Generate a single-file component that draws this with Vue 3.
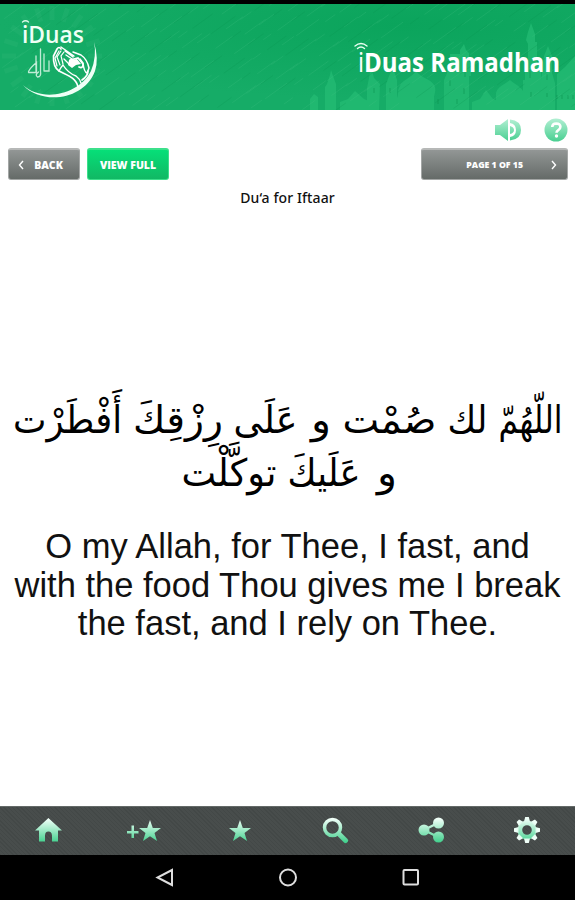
<script setup>
/**
 * Short diagonal strokes for the brushed header texture
 */
const strokes = Array.from({ length: 260 }, (_, i) => {
  const x = (i * 97.3) % 590
  const y = (i * 41.7) % 108
  const len = 8 + ((i * 13) % 17)
  return {
    d: `M${x.toFixed(1)} ${y.toFixed(1)}l${len} ${(-len * 0.72).toFixed(1)}`,
    color: i % 3 === 0 ? '#078f4c' : '#4cc78b'
  }
})

const rays = Array.from({ length: 20 }, (_, i) => i * 18)
const teeth = Array.from({ length: 8 }, (_, i) => i * 45)

/**
 * Arabic words with the centre and width of each one
 */
const arabicLines = [
  {
    y: 48,
    words: [
      { text: 'اللّهُمّ', x: 530.5, width: 64 },
      { text: 'لك', x: 467.5, width: 40 },
      { text: 'صُمْت', x: 389.5, width: 94 },
      { text: 'و', x: 321, width: 20 },
      { text: 'عَلَى', x: 265.5, width: 64 },
      { text: 'رِزْقِكَ', x: 178, width: 90 },
      { text: 'أَفْطَرْت', x: 67.5, width: 109 }
    ]
  },
  {
    y: 101,
    words: [
      { text: 'و', x: 387, width: 20 },
      { text: 'عَلَيكَ', x: 324, width: 73 },
      { text: 'توكَّلْت', x: 229, width: 95 }
    ]
  }
]

const englishLines = [
  'O my Allah, for Thee, I fast, and',
  'with the food Thou gives me I break',
  'the fast, and I rely on Thee.'
]
</script>

<template>
  <div class="screen">
    <header class="header">
      <svg class="banner" viewBox="0 0 575 106" width="575" height="106">
        <defs>
          <radialGradient id="shade" cx="0.7" cy="0.2" r="0.7">
            <stop offset="0" stop-color="#0ba45c" />
            <stop offset="1" stop-color="#16ac67" />
          </radialGradient>
        </defs>
        <rect width="575" height="106" fill="url(#shade)" />
        <g stroke="#2fb878" stroke-width="5" opacity="0.28">
          <path v-for="r in rays" :key="r" d="M52 2v14" :transform="`rotate(${r} 52 52)`" />
        </g>
        <g fill="#24bc74" opacity="0.75">
          <path d="M310 106V95l4-5 4 3v13zM325 106V83l2-3 3-9 1-5 2 6 3 8v26zM340 106V98l8-3 7-8 9 8 7 3v8z" />
          <path d="M367 106V84l2-10 2-12 3 12 6 6-1 26zM386 106V80l3-8 4-8 4 12v30z" />
          <path d="M397 106V94c2-4 0-8 3-12 2-6 11-8 16-15 5 7 15 8 18 14 3 5 0 9 0 13v12z" />
          <path d="M444 106V76l3-7v-8h3V50h10V46l4-6 2 6 3 3v9h2v14h-2v34zM472 106V98l8-3 6-9 7 9 8 3v8z" />
          <path d="M496 106V92c-1-8 6-10 14-16 7 6 15 8 14 17v13zM523 106V76h2V56h3V40l-2-4 2-8 3-9 4 11v8h2v22l4 4v42z" />
          <path d="M540 106V82l2-13 2-17 4-10 4 10v17l3 10v27zM557 106V70l8-7 10-11v54z" />
        </g>
        <g stroke="#078c49" stroke-width="1.5" opacity="0.32">
          <path d="M374 84v5M390 84v5M450 76v6M465 66v7M464 84v6M530 66v8M531 88v5M547 70v6M547 89v4M557 91v4M562 91v4M568 91v4M573 91v4M438 95v5M457 95v5" />
        </g>
        <g fill="none" stroke-width="0.9" opacity="0.23">
          <path v-for="(s, i) in strokes" :key="i" :d="s.d" :stroke="s.color" />
        </g>
        <!-- round logo -->
        <g fill="none" stroke="#fff" stroke-linecap="round">
          <path d="M23 81C41 98 78 92 91 67Q97 52 94 38Q99 55 95 67C84 97 41 101 23 81Z" fill="#effff6" stroke="none" />
          <path d="M22.5 18q3-2.5 6 0" stroke="#dcf8e9" stroke-width="1.3" />
          <path d="M28.5 68.500h8v-10q-6 5-8 9M36 68V52M38.500 68q-4 3-1 5 4 0 3-6V45M44 67V50M44 67h5V57" stroke="#bfecd5" stroke-width="1.3" />
          <!-- left hand -->
          <path d="M78 83C76 73 66 71 59 67Q53 63 53.5 52L57 45q2-3 4 0" stroke-width="1.7" />
          <path d="M57 62L55 54l4-7M60 61l-3-8 4-6M63 60l-2-8 3-4" stroke-width="1.2" />
          <path d="M61 43l13 9M65 47l8 6M66 51l6 4M64 55l5 5M59 67q2-4 4-6 5 8 13 11 4 3 5 7" stroke-width="1.4" />
          <!-- right hand -->
          <path d="M73 48l8 3q6 4 8 13l-2 5q-3-1-4-10l-3-4" stroke-width="1.5" />
          <path d="M70 56l8-2 5 6q0 5-4 3M88 67q0 5-6 9" stroke-width="1.7" />
          <path d="M69 56l8-1 4 5-5 1-4 3-4-3z" fill="#fff" stroke="none" />
        </g>
        <text class="brand" x="22" y="38.5" textLength="62" lengthAdjust="spacingAndGlyphs">iDuas</text>
        <path d="M355 42q6-5 12 0M357.5 44.5q3.5-3 7 0" fill="none" stroke="#e8fff2" stroke-width="1.4" stroke-linecap="round" />
        <text class="title" x="358" y="67.5" textLength="202" lengthAdjust="spacingAndGlyphs"><tspan class="title-i">i</tspan>Duas Ramadhan</text>
      </svg>
    </header>

    <main class="content">
      <svg class="defs" width="0" height="0">
        <defs>
          <linearGradient id="mint" x1="0" y1="0" x2="0" y2="1">
            <stop offset="0" stop-color="#b2efd3" />
            <stop offset="1" stop-color="#49cf91" />
          </linearGradient>
          <linearGradient id="tab" gradientUnits="userSpaceOnUse" x1="0" y1="2" x2="0" y2="26">
            <stop offset="0" stop-color="#f0fff8" />
            <stop offset="1" stop-color="#3dcf8a" />
          </linearGradient>
        </defs>
      </svg>
      <div class="tools">
        <svg width="28" height="24" viewBox="0 0 28 24">
          <path d="M0 7h5l8-6v22l-8-6H0z" fill="url(#mint)" />
          <path d="M15 1.5q11 1 11 10.5T15 22.5V19q6-1 6-7t-6-7zM15 8q4 1 4 4t-4 4z" fill="url(#mint)" />
        </svg>
        <svg width="24" height="24" viewBox="0 0 24 24">
          <circle cx="12" cy="12" r="11.5" fill="url(#mint)" />
          <path d="M8.2 9q.1-3.5 4-3.5 4.2.1 4.2 3.3 0 2-2.1 3.3-1.8 1.1-1.8 2.6" fill="none" stroke="#fff" stroke-width="2.6" />
          <circle cx="12.5" cy="18" r="1.7" fill="#fff" />
        </svg>
      </div>
      <nav class="actions">
        <button class="btn btn-back">
          <svg width="6" height="10" viewBox="0 0 6 10"><path d="M5 1L1.5 5 5 9" /></svg>
          <span>BACK</span>
        </button>
        <button class="btn btn-full">VIEW FULL</button>
        <button class="btn btn-page">
          <span>PAGE 1 OF 15</span>
          <svg width="6" height="10" viewBox="0 0 6 10"><path d="M1 1l3.5 4L1 9" /></svg>
        </button>
      </nav>
      <h1 class="heading">Du‘a for Iftaar</h1>
      <svg class="arabic" width="575" height="125" viewBox="0 0 575 125">
        <text v-for="line in arabicLines" :key="line.y" :y="line.y" direction="rtl" text-anchor="middle">
          <tspan
            v-for="word in line.words"
            :key="word.x"
            :x="word.x"
            :textLength="word.width"
            lengthAdjust="spacingAndGlyphs"
          >{{ word.text }}</tspan>
        </text>
      </svg>
      <p class="english">
        <span v-for="line in englishLines" :key="line">{{ line }}</span>
      </p>
    </main>

    <footer class="tabbar">
      <svg viewBox="0 0 28 28"><path d="M14.4 1L28 13.5h-4v11h-6v-6q-.3-4-3.6-4T11 18.5v6H5v-11H1z" /></svg>
      <svg class="add" viewBox="0 0 36 28">
        <path d="M1 14h4.500V8.500H8V14h4.500v2.500H8V21H5.500v-4.500H1z" />
        <path d="M24 3l2.800 8H35l-6.500 5L31 24l-7-4.800L17 24l2.500-8L13 11h8.200z" />
      </svg>
      <svg viewBox="0 0 28 28"><path d="M14 3l2.800 8H25l-6.500 5L21 24l-7-4.800L7 24l2.500-8L3 11h8.200z" /></svg>
      <svg viewBox="0 0 28 28">
        <circle class="line" cx="11.5" cy="10.5" r="8" stroke-width="3.500" />
        <path class="line" d="M18 17l6.500 6.500" stroke-width="5" stroke-linecap="round" />
      </svg>
      <svg viewBox="0 0 28 28">
        <path class="line" d="M21 6L7 13l14 7" stroke-width="2.5" />
        <circle cx="21.5" cy="6" r="5.5" /><circle cx="7" cy="13" r="5.500" /><circle cx="21.5" cy="20" r="5.5" />
      </svg>
      <svg viewBox="0 0 28 28">
        <circle class="line" cx="14" cy="13" r="7.2" stroke-width="4.8" />
        <path v-for="t in teeth" :key="t" d="M11 4.500L12.200 0h3.600L17 4.500z" :transform="`rotate(${t} 14 13)`" />
      </svg>
    </footer>
    <div class="system">
      <svg viewBox="0 0 20 20"><path d="M17 2v15L2.500 9.500z" /></svg>
      <svg viewBox="0 0 20 20"><circle cx="10" cy="9.5" r="8" /></svg>
      <svg viewBox="0 0 20 20"><rect x="2.5" y="2" width="14.5" height="14.5" rx="1" /></svg>
    </div>
  </div>
</template>

<style>
body {
  margin: 0;
}
</style>

<style scoped>
.screen {
  width: 575px;
  height: 900px;
  display: flex;
  flex-direction: column;
  background: #fff;
}
.header {
  height: 106px;
  border-top: 4px solid #000;
}
.banner {
  display: block;
  overflow: hidden;
}
.brand {
  font: 600 24px 'Open Sans', sans-serif;
  fill: #effff6;
}
.title {
  font: 700 27px 'Open Sans', sans-serif;
  fill: #fff;
}
.title-i {
  font-weight: 400;
}
.content {
  height: 696px;
  display: flex;
  flex-direction: column;
}
.defs {
  display: block;
}
.tools {
  display: flex;
  justify-content: flex-end;
  gap: 21px;
  padding: 8px 7px 0 0;
  height: 30px;
}
.actions {
  display: flex;
  gap: 7px;
  padding: 0 7px 0 8px;
}
.btn {
  box-sizing: border-box;
  height: 32px;
  padding: 0;
  display: flex;
  align-items: center;
  justify-content: center;
  border: 1px solid #a3a6a5;
  border-top: 2px solid #b6b8b7;
  border-radius: 3px;
  background: linear-gradient(#929695, #656b68);
  color: #fff;
  font: 800 10.5px 'Open Sans', sans-serif;
}
.btn path {
  fill: none;
  stroke: #fff;
  stroke-width: 1.4;
}
.btn-back {
  width: 72px;
  gap: 10px;
  padding-right: 7px;
}
.btn-full {
  width: 82px;
  border-color: #3ce08b;
  background: linear-gradient(#06df78, #11b864);
}
.btn-page {
  width: 147px;
  margin-left: auto;
  justify-content: flex-end;
  gap: 28px;
  padding-right: 10px;
  font-size: 8.7px;
}
.heading {
  margin: 8px 0 0;
  text-align: center;
  font: 500 14px/20px 'Noto Sans', sans-serif;
  letter-spacing: 0.1px;
  color: #111;
}
.arabic {
  display: block;
  overflow: visible;
  margin-top: 177px;
  font-family: 'DejaVu Sans', sans-serif;
  font-size: 38px;
}
.english {
  margin: 17px 0 0;
  display: flex;
  flex-direction: column;
  align-items: center;
  font: 34.5px/38.5px 'Liberation Sans', sans-serif;
  color: #111;
}
.tabbar {
  height: 49px;
  box-sizing: border-box;
  border-top: 1px solid #646a68;
  display: grid;
  grid-template-columns: repeat(6, 1fr);
  align-items: center;
  justify-items: center;
  background: repeating-linear-gradient(45deg, #434847 0 1px, #484d4c 1px 3px);
}
.tabbar svg {
  width: 28px;
  height: 28px;
  fill: url(#tab);
}
.tabbar .add {
  width: 36px;
}
.tabbar .line {
  fill: none;
  stroke: url(#tab);
}
.system {
  flex: 1;
  display: flex;
  justify-content: center;
  align-items: center;
  gap: 103px;
  background: #000;
}
.system svg {
  width: 20px;
  height: 20px;
  fill: none;
  stroke: #dedede;
  stroke-width: 2;
}
</style>
